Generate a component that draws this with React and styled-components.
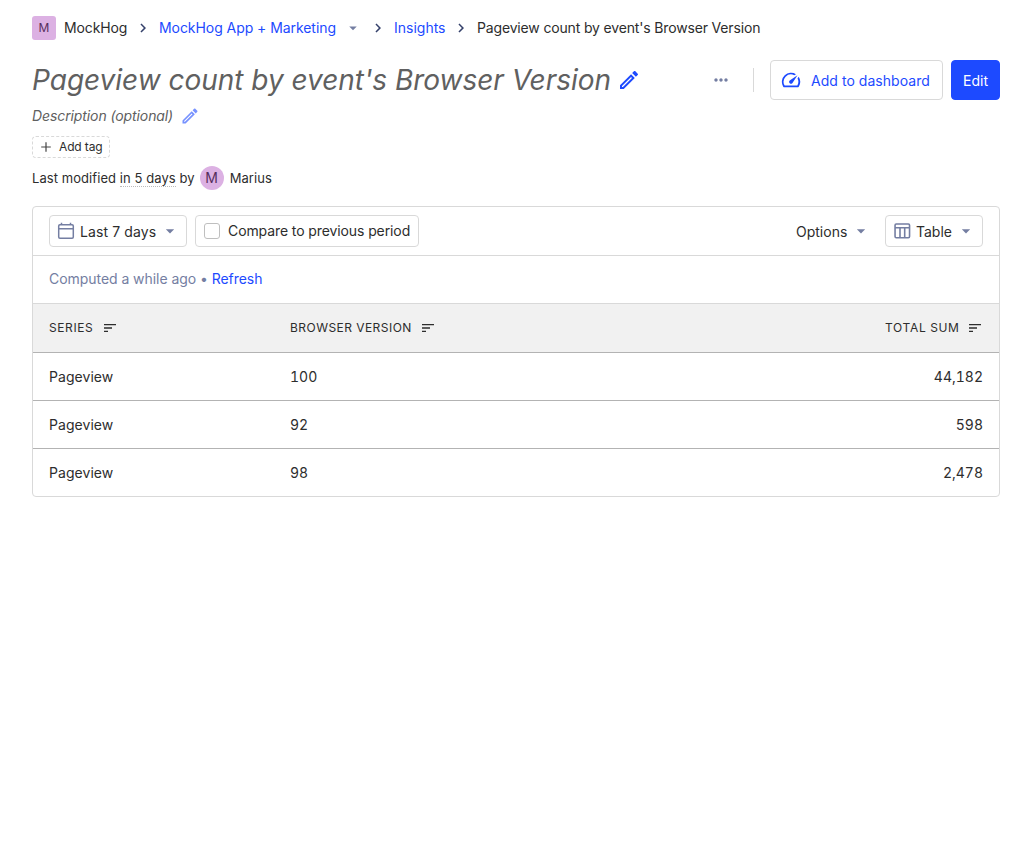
import React from 'react';
import styled, { createGlobalStyle, css } from 'styled-components';
import {
  MdArrowDropDown,
  MdChevronRight,
  MdMoreHoriz,
  MdOutlineEdit,
  MdSort,
  MdSpeed,
} from 'react-icons/md';

const PRIMARY = '#1d4aff';
const TEXT = '#2d2d2d';
const MUTED = '#747ea2';
const BORDER = '#d9d9d9';

const GlobalStyle = createGlobalStyle`
  *, *::before, *::after { box-sizing: border-box; }
  body {
    margin: 0;
    background: #fff;
    color: ${TEXT};
    font: 400 14px/20px Inter, "Liberation Sans", sans-serif;
  }
  svg { display: block; flex-shrink: 0; }
`;

const Page = styled.main`
  display: flex;
  flex-direction: column;
  padding: 0 32px;
`;

const Breadcrumbs = styled.nav`
  display: flex;
  align-items: center;
  height: 24px;
  margin-top: 16px;
`;

const Lettermark = styled.span`
  display: flex;
  align-items: center;
  justify-content: center;
  width: 24px;
  height: 24px;
  flex-shrink: 0;
  background: #dcb1e3;
  color: #572e5e;
  border-radius: ${(p) => (p.$round ? '50%' : '3px')};
  font-size: ${(p) => (p.$round ? '14px' : '12px')};
  letter-spacing: 0;
`;

const Crumb = styled.span`
  white-space: nowrap;
  width: ${(p) => p.$width}px;
  margin-left: ${(p) => p.$gap || 0}px;
  color: ${(p) => (p.$link ? PRIMARY : TEXT)};
  letter-spacing: ${(p) => p.$tracking || 0}px;
`;

const CrumbArrow = styled(MdChevronRight)`
  width: 18px;
  height: 18px;
  margin: 0 7px;
  color: #35416b;
`;

const Caret = styled(MdArrowDropDown)`
  width: ${(p) => p.$size}px;
  height: ${(p) => p.$size}px;
  color: ${MUTED};
`;

const CrumbCaret = styled(Caret)`
  margin-left: 8px;
`;

const TitleBar = styled.header`
  display: flex;
  align-items: center;
  height: 40px;
  margin-top: 20px;
`;

const Title = styled.h1`
  width: 577px;
  margin: 0 8px 0 0;
  font-size: 28px;
  font-weight: 400;
  font-style: italic;
  line-height: 40px;
  letter-spacing: -0.02px;
  white-space: nowrap;
  color: #606060;
`;

const EditIcon = styled(MdOutlineEdit)`
  width: ${(p) => p.$size}px;
  height: ${(p) => p.$size}px;
  color: ${PRIMARY};
  opacity: ${(p) => (p.$faded ? 0.6 : 1)};
`;

const Actions = styled.div`
  display: flex;
  align-items: center;
  margin-left: auto;
`;

const MoreIcon = styled(MdMoreHoriz)`
  width: 20px;
  height: 20px;
  color: ${MUTED};
`;

const Divider = styled.span`
  width: 1px;
  height: 24px;
  margin: 0 16px 0 22px;
  background: ${BORDER};
`;

const Button = styled.button`
  display: flex;
  align-items: center;
  width: ${(p) => p.$width}px;
  height: 40px;
  padding: 2px 11px 0;
  border: 1px solid ${BORDER};
  border-radius: 4px;
  background: #fff;
  color: ${PRIMARY};
  font: inherit;
  letter-spacing: 0.04px;
  white-space: nowrap;
  ${(p) =>
    p.$primary &&
    css`
      margin-left: 8px;
      border-color: ${PRIMARY};
      background: ${PRIMARY};
      color: #fff;
    `}
`;

const GaugeIcon = styled(MdSpeed)`
  width: 22px;
  height: 22px;
  margin: -2px 9px 0 -2px;
`;

const Description = styled.div`
  display: flex;
  align-items: center;
  height: 24px;
  margin-top: 4px;
  color: #606060;
  font-style: italic;
`;

const DescriptionText = styled.span`
  width: 148px;
  letter-spacing: -0.1px;
`;

const TagButton = styled.button`
  display: flex;
  align-items: center;
  align-self: flex-start;
  width: 78px;
  height: 22px;
  margin-top: 8px;
  padding: 0 5px;
  border: 1px dashed ${BORDER};
  border-radius: 4px;
  background: #fff;
  color: ${TEXT};
  font: 400 12px/20px Inter, sans-serif;
  letter-spacing: -0.13px;
  white-space: nowrap;
  > svg { margin-right: 5px; }
`;

const Modified = styled.div`
  display: flex;
  align-items: center;
  height: 24px;
  margin-top: 8px;
  font-size: 13px;
  letter-spacing: 0.07px;
  white-space: pre;
`;

const Since = styled.span`
  height: 17px;
  line-height: 17px;
  border-bottom: 1px dotted #bbb;
`;

const Author = styled.span`
  display: flex;
  align-items: center;
  gap: 6px;
  margin-left: 5px;
`;

const Card = styled.section`
  margin-top: 16px;
  border: 1px solid ${BORDER};
  border-radius: 4px;
  overflow: hidden;
`;

const Toolbar = styled.div`
  display: flex;
  align-items: center;
  gap: 8px;
  height: 49px;
  padding: 0 16px;
  border-bottom: 1px solid ${BORDER};
`;

const Control = styled.button`
  display: flex;
  align-items: center;
  width: ${(p) => p.$width}px;
  height: 32px;
  padding: 0 7px;
  border: 1px solid ${(p) => (p.$plain ? 'transparent' : BORDER)};
  border-radius: 4px;
  margin-left: ${(p) => (p.$push ? 'auto' : 0)};
  background: #fff;
  color: ${TEXT};
  font: inherit;
  white-space: nowrap;

  > svg:first-child { margin-right: 5px; color: ${MUTED}; }
  > svg:last-child { margin-left: auto; margin-right: ${(p) => (p.$plain ? -2 : -1)}px; }
`;

const Label = styled.span`
  padding-top: ${(p) => p.$drop || 0}px;
  letter-spacing: ${(p) => p.$tracking || 0}px;
`;

const Checkbox = styled.span`
  flex-shrink: 0;
  width: 16px;
  height: 16px;
  margin: 0 8px 0 1px;
  border: 1px solid #bfbfbf;
  border-radius: 3px;
`;

const Status = styled.div`
  display: flex;
  align-items: center;
  height: 47px;
  padding: 0 16px 2px;
  color: ${MUTED};
  letter-spacing: -0.05px;
  white-space: pre;
`;

const Link = styled.a`
  color: ${PRIMARY};
`;

const Table = styled.div`
  border-top: 1px solid ${BORDER};
`;

const Row = styled.div`
  display: grid;
  grid-template-columns: 241px 1fr 1fr;
  align-items: center;
  height: ${(p) => (p.$last ? 47 : 48)}px;
  padding: 0 16px;
  border-bottom: ${(p) => (p.$last ? 'none' : '1px solid #b3b3b3')};
  font-variant-numeric: tabular-nums;
`;

const HeadRow = styled(Row)`
  height: 49px;
  background: #f1f1f1;
  font-size: 12px;
  text-transform: uppercase;
`;

const Cell = styled.div`
  display: flex;
  align-items: center;
  justify-content: ${(p) => (p.$end ? 'flex-end' : 'flex-start')};
  letter-spacing: ${(p) => p.$tracking || 0}px;
`;

const SortIcon = styled(MdSort)`
  width: 16px;
  height: 16px;
  margin-left: ${(p) => (p.$tight ? 7.4 : 8.4)}px;
`;

const PlusIcon = () => (
  <svg width="16" height="16" viewBox="0 0 16 16" fill="none" stroke="#444" strokeWidth="1.2">
    <path d="M8 3.2v9.6M3.2 8h9.6" />
  </svg>
);

const CalendarIcon = () => (
  <svg width="18" height="18" viewBox="0 0 18 18" fill="none" stroke="currentColor" strokeWidth="1.5">
    <rect x="1.7" y="2.7" width="14.6" height="13.6" rx="1.2" />
    <path d="M1.7 6.7h14.6M4.5 0.7v2M13.5 0.7v2" />
  </svg>
);

const TableIcon = () => (
  <svg width="18" height="18" viewBox="0 0 18 18" fill="none" stroke="currentColor" strokeWidth="1.6">
    <rect x="2.05" y="2" width="14.5" height="13.7" rx="1.2" />
    <path d="M2.05 5.8h14.5M7 5.8v9.9M11.7 5.8v9.9" />
  </svg>
);

const rows = [
  ['Pageview', '100', '44,182'],
  ['Pageview', '92', '598'],
  ['Pageview', '98', '2,478'],
];

export default function App() {
  return (
    <>
      <GlobalStyle />
      <Page>
        <Breadcrumbs>
          <Lettermark>M</Lettermark>
          <Crumb $gap={8} $width={63} $tracking={-0.12}>MockHog</Crumb>
          <CrumbArrow />
          <Crumb $link $width={177} $tracking={-0.06}>MockHog App + Marketing</Crumb>
          <CrumbCaret $size={18} />
          <CrumbArrow />
          <Crumb $link $width={51}>Insights</Crumb>
          <CrumbArrow />
          <Crumb $tracking={-0.16}>Pageview count by event's Browser Version</Crumb>
        </Breadcrumbs>

        <TitleBar>
          <Title>Pageview count by event's Browser Version</Title>
          <EditIcon $size={24} />
          <Actions>
            <MoreIcon />
            <Divider />
            <Button $width={173}>
              <GaugeIcon />
              Add to dashboard
            </Button>
            <Button $primary $width={49}>Edit</Button>
          </Actions>
        </TitleBar>

        <Description>
          <DescriptionText>Description (optional)</DescriptionText>
          <EditIcon $size={20} $faded />
        </Description>

        <TagButton>
          <PlusIcon />
          Add tag
        </TagButton>

        <Modified>
          {'Last modified '}
          <Since>in 5 days</Since>
          {' by'}
          <Author>
            <Lettermark $round>M</Lettermark>
            Marius
          </Author>
        </Modified>

        <Card>
          <Toolbar>
            <Control $width={138}>
              <CalendarIcon />
              <Label $drop={2} $tracking={0.1}>Last 7 days</Label>
              <Caret $size={20} />
            </Control>
            <Control as="label" $width={224}>
              <Checkbox />
              <Label $tracking={-0.1}>Compare to previous period</Label>
            </Control>
            <Control $plain $push $width={89}>
              <Label $drop={2}>Options</Label>
              <Caret $size={20} />
            </Control>
            <Control $width={98}>
              <TableIcon />
              <Label $drop={2}>Table</Label>
              <Caret $size={20} />
            </Control>
          </Toolbar>
          <Status>
            {'Computed a while ago • '}
            <Link>Refresh</Link>
          </Status>
          <Table>
            <HeadRow>
              <Cell $tracking={0.6}>Series<SortIcon /></Cell>
              <Cell $tracking={0.47}>Browser Version<SortIcon /></Cell>
              <Cell $end $tracking={0.65}>Total sum<SortIcon $tight /></Cell>
            </HeadRow>
            {rows.map(([series, version, total], i) => (
              <Row key={version} $last={i === rows.length - 1}>
                <Cell $tracking={0.05}>{series}</Cell>
                <Cell>{version}</Cell>
                <Cell $end>{total}</Cell>
              </Row>
            ))}
          </Table>
        </Card>
      </Page>
    </>
  );
}
